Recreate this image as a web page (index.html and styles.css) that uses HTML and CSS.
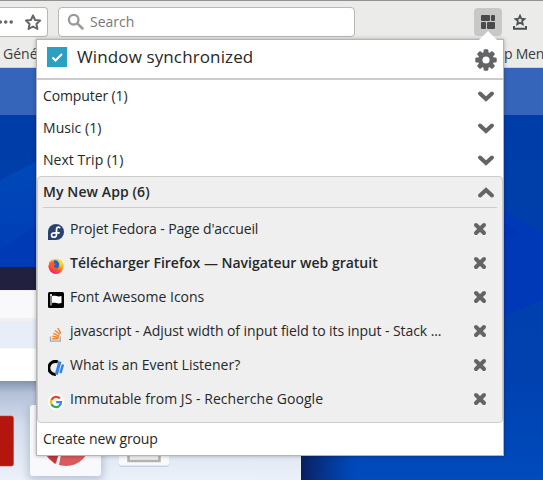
FILE: index.html
```html
<!DOCTYPE html>
<html lang="en">
<head>
<meta charset="utf-8">
<title>Window synchronized</title>
<link rel="stylesheet" href="styles.css">
</head>
<body>
<div class="browser">
  <header class="chrome">
    <div class="toolbar">
      <div class="urlbar">
        <svg width="47" height="28" viewBox="0 0 47 28"><g fill="#666"><circle cx=".3" cy="14" r="1.8"/><circle cx="5.7" cy="14" r="1.8"/><circle cx="11.2" cy="14" r="1.8"/></g><path d="M33 7.500l2.100 4.500 5 .6-3.700 3.400 1 5-4.400-2.500-4.400 2.500 1-5-3.700-3.400 5-.6z" fill="none" stroke="#666" stroke-width="2" stroke-linejoin="round"/></svg>
      </div>
      <div class="search">
        <svg width="18" height="18" viewBox="0 0 18 18"><circle cx="6.700" cy="6.700" r="4.800" fill="none" stroke="#999" stroke-width="2.300"/><path d="M10.300 10.300l5.200 5.200" stroke="#999" stroke-width="2.500" stroke-linecap="round"/></svg>
        <span class="t search-text">Search</span>
      </div>
      <div class="action">
        <svg width="14" height="14" viewBox="0 0 14 14" fill="#4a4a4a"><rect width="9" height="6" rx="1"/><rect x="10" width="4" height="6" rx="1"/><rect y="7" width="5" height="7" rx="1"/><rect x="6" y="7" width="8" height="7" rx="1"/></svg>
      </div>
      <svg class="marks" width="16" height="17" viewBox="0 0 16 17" fill="none" stroke="#4a4e50"><path d="M8 1.700l1.300 2.900 3.200.4-2.400 2.100.7 3.200L8 8.700l-2.800 1.600.7-3.200L3.500 5l3.200-.4z" stroke-width="1.700"/><path d="M2 12v2.800h12V12" stroke-width="2"/></svg>
    </div>
    <div class="bookmarks"><span class="t">Géné</span><span class="t men">p Men</span></div>
  </header>
  <svg class="page" width="543" height="412" viewBox="0 68 543 412">
    <defs>
      <linearGradient id="sky" x2="0" y2="1"><stop stop-color="#003ca6"/><stop offset=".75" stop-color="#0041b0"/><stop offset="1" stop-color="#004bbd"/></linearGradient>
      <linearGradient id="left" x2="0" y2="1"><stop stop-color="#0049b9"/><stop offset="1" stop-color="#003bb5"/></linearGradient>
      <linearGradient id="desk" x2="0" y2="1"><stop stop-color="#8493ae"/><stop offset=".12" stop-color="#b3c0d7"/><stop offset=".45" stop-color="#d6dfee"/><stop offset="1" stop-color="#ebf1f9"/></linearGradient>
      <linearGradient id="shade"><stop stop-color="#0a1f5c"/><stop offset="1" stop-color="#0a2a7a" stop-opacity="0"/></linearGradient>
      <filter id="soft" x="-30%" y="-30%" width="160%" height="160%"><feGaussianBlur stdDeviation="4"/></filter>
    </defs>
    <path fill="url(#sky)" d="M0 68h543v412H0z"/>
    <path fill="#3465ba" d="M0 68h543v47H0z"/>
    <path fill="url(#left)" d="M0 180l36-18v106H0z"/>
    <path fill="#003bb5" d="M0 250l36-24v41H0z"/>
    <path fill="#0039b8" d="M504 211l39 23v66l-39 16z"/>
    <path fill="#0035b9" d="M504 222l17 12-17 7z"/>
    <path fill="url(#shade)" d="M301 456h55v24h-55z"/>
    <path fill="#22203f" d="M0 267h301v24H0z"/>
    <path fill="#f0f0f2" d="M0 290h301v32H0z"/>
    <path fill="#f9f9fb" d="M0 291h301v27H0z"/>
    <path fill="#e8eef8" d="M0 321h301v28H0z"/>
    <path fill="#fff" d="M0 348.500h301v33H0z"/>
    <path fill="url(#desk)" d="M0 381h301v99H0z"/>
    <rect x="28" y="407" width="75" height="73" rx="4" fill="#8796b4" opacity=".5" filter="url(#soft)"/>
    <rect x="-5" y="416" width="18.500" height="50" rx="2" fill="#b4160f" stroke="#c6433d" stroke-width=".6"/>
    <rect x="30" y="405" width="71" height="71" rx="3" fill="#f8f9fc"/>
    <circle cx="66" cy="442" r="24" fill="#d95b5d"/>
    <path d="M62 442l-5 25" stroke="#f8f9fc" stroke-width="3"/>
    <path d="M45 453l10 11 4-10z" fill="#c83538"/>
    <rect x="119" y="416" width="50" height="51" rx="3" fill="#c8d3e5"/>
    <rect x="119" y="416" width="50" height="49.500" rx="3" fill="#f9fafc"/>
    <path d="M128.500 430v31h31v-31" fill="#f1f1f1" stroke="#b3b3b3" stroke-width="2.500"/>
  </svg>

  <section class="popup">
    <svg class="arrow" width="20" height="11" viewBox="0 0 20 11"><path d="M0 11L10 1l10 10z" fill="#fff"/></svg>
    <div class="head">
      <span class="check"><svg width="20" height="20" viewBox="0 0 20 20"><path d="M5.500 10.500l3 3L15 7" fill="none" stroke="#fff" stroke-width="2"/></svg></span>
      <span class="t title">Window synchronized</span>
      <svg class="gear" width="22" height="22" viewBox="-11 -11 22 22"><g fill="#636466"><g id="teeth"><rect x="-2.400" y="-10.700" width="4.800" height="21.400" rx="1.200"/><rect x="-10.700" y="-2.400" width="21.400" height="4.800" rx="1.200"/></g><use href="#teeth" transform="rotate(45)"/><circle r="8"/></g><circle r="3.600" fill="#fff"/></svg>
    </div>
    <div class="row"><span class="t tight">Computer (1)</span><svg class="chev" width="18" height="12" viewBox="0 0 18 12"><path d="M3 3.500L9 9l6-5.500"/></svg></div>
    <div class="row"><span class="t loose">Music (1)</span><svg class="chev" width="18" height="12" viewBox="0 0 18 12"><path d="M3 3.500L9 9l6-5.500"/></svg></div>
    <div class="row"><span class="t loose">Next Trip (1)</span><svg class="chev" width="18" height="12" viewBox="0 0 18 12"><path d="M3 3.500L9 9l6-5.500"/></svg></div>
    <div class="group">
      <div class="group-head"><span class="t bold name">My New App (6)</span><svg class="chev up" width="18" height="12" viewBox="0 0 18 12"><path d="M3 8.500L9 3l6 5.500"/></svg></div>
      <div class="tabs">
        <div class="tab"><svg class="fav" width="16" height="16" viewBox="0 0 16 16"><path d="M0 16V8a8 8 0 1 1 8 8z" fill="#294172"/><path d="M11.700 3.600C9.800 2.500 8.500 3.600 8.500 5.500V10.500c0 2-1.500 3-3.200 2.700C3.300 12.900 3 10.300 4.500 9.300c1-.6 2-.5 4-.5h2.600" fill="none" stroke="#fff" stroke-width="1.700" stroke-linecap="round"/></svg><span class="t tight">Projet Fedora - Page d'accueil</span><svg class="close" width="14" height="14" viewBox="0 0 14 14"><path d="M3 3l8 8M11 3l-8 8"/></svg></div>
        <div class="tab"><svg class="fav" width="16" height="16" viewBox="0 0 16 16"><defs><linearGradient id="fox" x1=".8" y1="0" x2=".2" y2="1"><stop stop-color="#fff044"/><stop offset=".35" stop-color="#ffb01e"/><stop offset=".65" stop-color="#ff5030"/><stop offset="1" stop-color="#e8158c"/></linearGradient></defs><circle cx="8" cy="8.300" r="7.600" fill="url(#fox)"/><path d="M1 3l1 1.500L4 2l1 2-3 3z" fill="#ff7a25"/><path d="M6 2.500c3-1 5.300 1.500 5.100 4.500S9.300 10.500 7.500 10.500 4 9 4.500 7z" fill="#1469cf"/><path d="M1.500 5l3.500-1 2.700 2.300-2 1.500 1 2 3 .3c-2 2-5 1.500-6.500-.5z" fill="#ff5a25"/><path d="M9 .5c3 2 4.500 5 3 8 2-1 2.500-3 2-5.500z" fill="#ffd62f"/></svg><span class="t bold">Télécharger Firefox — Navigateur web gratuit</span><svg class="close" width="14" height="14" viewBox="0 0 14 14"><path d="M3 3l8 8M11 3l-8 8"/></svg></div>
        <div class="tab"><svg class="fav" width="16" height="16" viewBox="0 0 16 16"><rect width="16" height="16" rx="1.500"/><path d="M3 3v10.500" stroke="#fff"/><path d="M4 4.300c3-1.500 5 1 9.500-.2v7C9 12.500 7 9.800 4 11.300z" fill="#fff"/><circle cx="3" cy="3" r="1" fill="#fff"/></svg><span class="t">Font Awesome Icons</span><svg class="close" width="14" height="14" viewBox="0 0 14 14"><path d="M3 3l8 8M11 3l-8 8"/></svg></div>
        <div class="tab"><svg class="fav" width="16" height="16" viewBox="0 0 16 16" fill="none"><path d="M2.500 10.500v4.700h9.800v-4.700" stroke="#a3aab0" stroke-width="1.300"/><path d="M4.300 12.800h6.300M4.500 10.200l6.200 1.300M5.300 7.400l5.800 2.700M7 4.500l5 4M9.700 2l3.200 5.300" stroke="#f48024" stroke-width="1.400"/></svg><span class="t long">javascript - Adjust width of input field to its input - Stack ...</span><svg class="close" width="14" height="14" viewBox="0 0 14 14"><path d="M3 3l8 8M11 3l-8 8"/></svg></div>
        <div class="tab"><svg class="fav" width="16" height="16" viewBox="0 0 16 16" fill="none"><path d="M9.800 1.900A6.500 6.500 0 1 0 7.800 14.400" stroke="#000" stroke-width="3"/><path d="M11.900 1.500L8.300 14.500" stroke="#2f80ed" stroke-width="3"/><path d="M15 4.500l-2.600 8.700" stroke="#2f80ed" stroke-width="2.400"/></svg><span class="t">What is an Event Listener?</span><svg class="close" width="14" height="14" viewBox="0 0 14 14"><path d="M3 3l8 8M11 3l-8 8"/></svg></div>
        <div class="tab"><svg class="fav" width="16" height="16" viewBox="0 0 16 16" fill="none" stroke-width="2.300"><circle cx="8" cy="8" r="8" fill="#fff"/><path d="M11.900 4.500A5 5 0 0 0 3.500 6" stroke="#ea4335"/><path d="M3.500 5.800a5 5 0 0 0 0 4.400" stroke="#fbbc05"/><path d="M3.500 10.200a5 5 0 0 0 7.800 1.600" stroke="#34a853"/><path d="M11.200 11.900A5 5 0 0 0 13 8.200H8.200" stroke="#4285f4"/></svg><span class="t loose">Immutable from JS - Recherche Google</span><svg class="close" width="14" height="14" viewBox="0 0 14 14"><path d="M3 3l8 8M11 3l-8 8"/></svg></div>
      </div>
    </div>
    <div class="row foot"><span class="t tight">Create new group</span></div>
  </section>
</div>
</body>
</html>
```
FILE: styles.css
```css
* { box-sizing: border-box; }
body { margin: 0; background: #003ca6; }
svg { display: block; flex: none; }
.browser {
  position: relative;
  width: 543px;
  height: 480px;
  overflow: hidden;
  font: 14px/20px "Open Sans", "Noto Sans", sans-serif;
  color: #26282a;
}
.t { white-space: nowrap; display: block; }
.tight { letter-spacing: -.11px; }
.long { letter-spacing: -.08px; }
.loose { letter-spacing: .04px; }
.bold { font-weight: 600; letter-spacing: 0; }
.name { letter-spacing: .1px; }
.chrome {
  height: 68px;
  background: #ebebe9;
  border-top: 1px solid #929292;
  border-bottom: 1px solid #d0d0ca;
}
.toolbar { display: flex; height: 43px; padding-top: 6px; }
.urlbar {
  width: 48px;
  height: 30px;
  background: #fff;
  border: 1px solid #b8b8b5;
  border-left: 0;
  border-radius: 0 4px 4px 0;
}
.search {
  display: flex;
  align-items: center;
  width: 297px;
  height: 30px;
  margin-left: 10px;
  padding-left: 8px;
  gap: 5px;
  background: #fff;
  border: 1px solid #b8b8b5;
  border-radius: 4px;
  color: #777;
}
.action {
  display: grid;
  place-items: center;
  width: 28px;
  height: 28px;
  margin: 1px 0 0 119px;
  background: #c8c8c8;
  border-radius: 4px;
}
.marks { margin: 7px 0 0 10px; }
.bookmarks {
  display: flex;
  justify-content: space-between;
  padding-left: 3px;
  color: #393d3f;
}
.men { width: 39px; letter-spacing: -.25px; }
.popup {
  position: absolute;
  left: 36px;
  top: 39px;
  width: 468px;
  height: 417px;
  background: #fff;
  border: 1px solid #b5b5b3;
  box-shadow: 0 0 4px rgba(0, 0, 0, .3);
}
.arrow { position: absolute; left: 441px; top: -10px; }
.head {
  display: flex;
  align-items: center;
  height: 40px;
  padding: 0 6px 4px 10px;
  border-bottom: 2px solid #ccc;
}
.check { width: 20px; height: 20px; background: #2ba0c2; }
.title { margin-left: 10px; font-size: 17px; letter-spacing: .12px; }
.gear { margin: 5px 0 0 auto; }
.row {
  display: flex;
  align-items: center;
  justify-content: space-between;
  height: 32px;
  padding: 0 8px 0 6px;
}
.chev { margin-top: 0; fill: none; stroke: #636466; stroke-width: 4; stroke-linecap: round; }
.chev.up { margin-top: 2px; }
.group {
  height: 247px;
  background: #efefef;
  border: 1px solid #ccc;
  border-radius: 4px;
  padding: 0 5px;
}
.group-head {
  display: flex;
  align-items: center;
  justify-content: space-between;
  height: 31px;
  padding-right: 2px;
  border-bottom: 1px solid #ccc;
}
.tabs { padding-top: 4px; }
.tab { display: flex; align-items: center; height: 34px; padding: 0 10px 0 5px; }
.fav { margin: 5px 6px 0 0; }
.close { margin-left: auto; fill: none; stroke: #636466; stroke-width: 4; stroke-linecap: round; }
.foot { height: 32px; }
```
